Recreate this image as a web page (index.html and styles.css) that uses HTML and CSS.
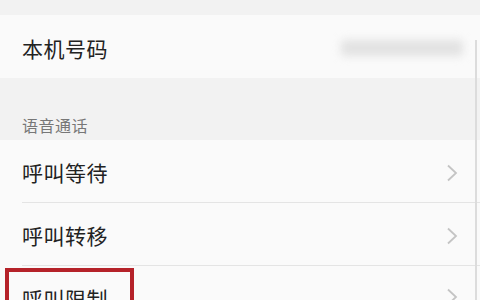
FILE: index.html
```html
<!DOCTYPE html>
<html lang="zh">
<head>
<meta charset="utf-8">
<link rel="stylesheet" href="styles.css">
</head>
<body>
<div class="page">
  <div class="gap-top"></div>
  <div class="row first">
    <span class="label">本机号码</span>
    <span class="number"></span>
  </div>
  <div class="section-title">语音通话</div>
  <div class="group">
    <div class="row item">
      <span class="label">呼叫等待</span>
      <svg class="chev" viewBox="0 0 12 18" width="12" height="18"><path d="M2 1.5 L10 9 L2 16.5" fill="none" stroke="#c4c4c4" stroke-width="1.8"/></svg>
    </div>
    <div class="row item">
      <span class="label">呼叫转移</span>
      <svg class="chev" viewBox="0 0 12 18" width="12" height="18"><path d="M2 1.5 L10 9 L2 16.5" fill="none" stroke="#c4c4c4" stroke-width="1.8"/></svg>
    </div>
    <div class="row item last">
      <span class="label boxed">呼叫限制</span>
      <svg class="chev" viewBox="0 0 12 18" width="12" height="18"><path d="M2 1.5 L10 9 L2 16.5" fill="none" stroke="#c4c4c4" stroke-width="1.8"/></svg>
    </div>
  </div>
  <div class="scrollbar"></div>
</div>
</body>
</html>
```
FILE: styles.css
```css
html, body {
  margin: 0;
  padding: 0;
}
body {
  background: #f2f2f2;
  font-family: "Noto Sans CJK SC", "Noto Sans", sans-serif;
  width: 480px;
  height: 300px;
  overflow: hidden;
}
.page {
  position: relative;
  width: 480px;
  height: 300px;
}
.gap-top {
  height: 15px;
}
.row {
  display: flex;
  align-items: center;
  justify-content: space-between;
  background: #fafafa;
  padding: 0 22px;
  box-sizing: border-box;
}
.row.first {
  height: 63px;
  padding-top: 3px;
}
.label {
  font-size: 21px;
  color: #222;
  line-height: 1;
  letter-spacing: 0.5px;
}
.number {
  width: 122px;
  height: 16px;
  margin-right: -5px;
  background: #e2e2e2;
  filter: blur(4px);
  border-radius: 4px;
}
.section-title {
  height: 62px;
  box-sizing: border-box;
  padding: 38px 0 0 22px;
  font-size: 16px;
  line-height: 18px;
  color: #777;
  letter-spacing: 0.5px;
}
.group {
  background: #fafafa;
}
.item {
  height: 63px;
  padding-top: 2px;
  position: relative;
}
.item::after {
  content: "";
  position: absolute;
  left: 22px;
  right: 0;
  bottom: 0;
  height: 1px;
  background: #e4e4e4;
}
.item.last::after {
  display: none;
}
.item.last {
  padding-top: 0;
  align-items: flex-start;
  padding-top: 22px;
}
.chev {
  margin-right: 0;
}
.boxed {
  position: relative;
}
.boxed::before {
  content: "";
  position: absolute;
  left: -17px;
  top: -20px;
  width: 121px;
  height: 60px;
  border: 4px solid #b52229;
}
.scrollbar {
  position: absolute;
  left: 475px;
  top: 40px;
  width: 2px;
  bottom: 0;
  background: #dcdcdc;
}
```
